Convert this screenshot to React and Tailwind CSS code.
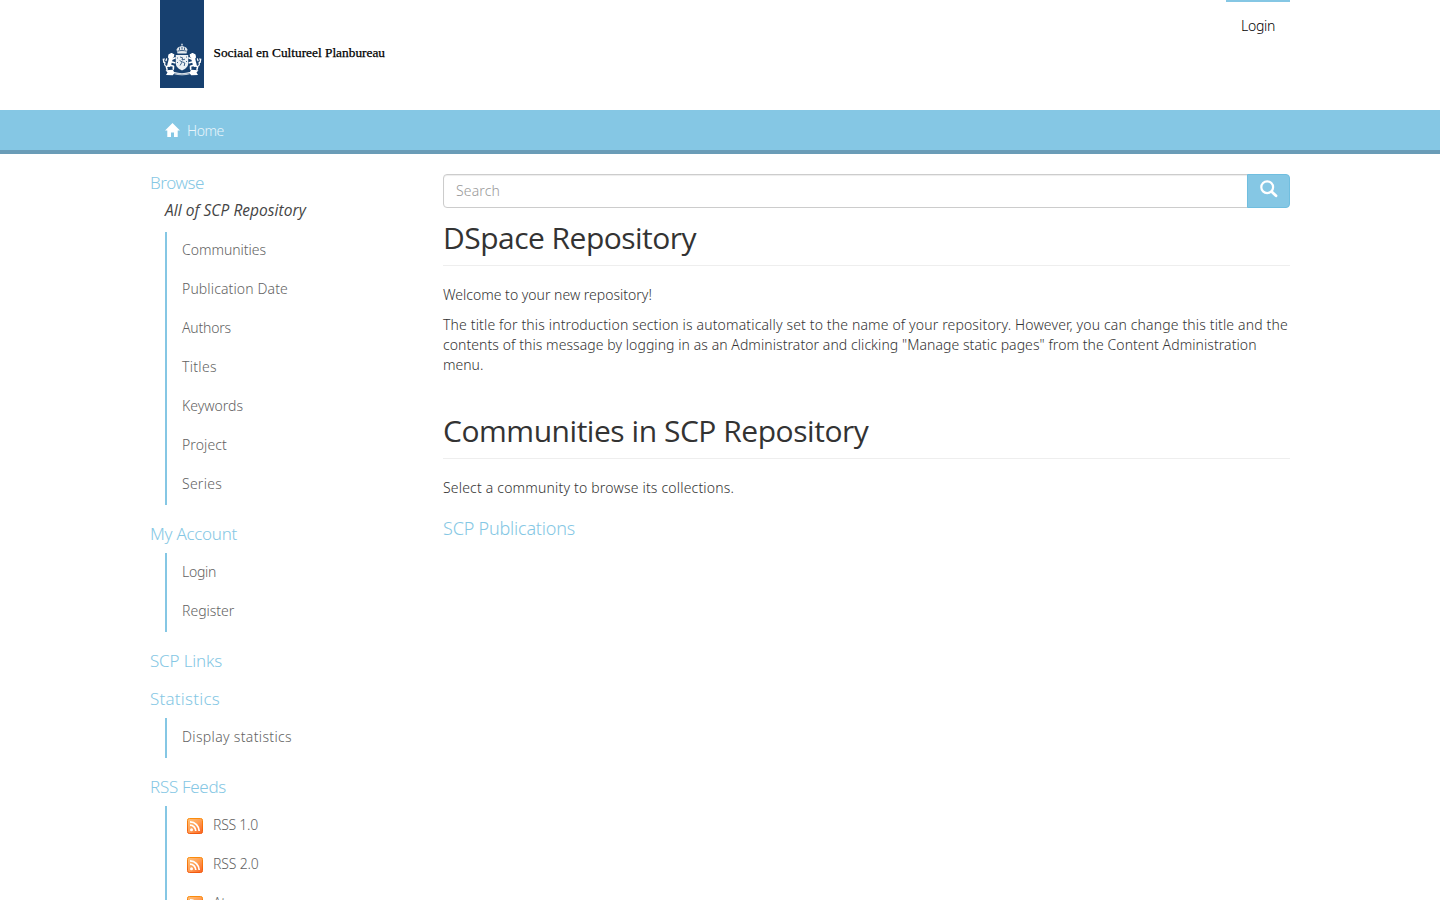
function CoatOfArms() {
  return (
    <svg viewBox="0 0 44 88" className="block h-[88px] w-[44px] shrink-0 bg-[#17406f]">
      <g fill="#fff">
        {/* crown */}
        <path d="M21.300 43.800h1.400v1.600h-1.400zM17.500 53.400l-1-4 1.400-2 2.200-.8 1.900-.5 1.900.5 2.200.8 1.400 2-1 4z" opacity=".88" />
        {/* shield */}
        <path d="M15.800 55h12.400v8.200c0 3.600-2.800 5.600-6.200 7.200-3.400-1.600-6.200-3.600-6.200-7.200z" opacity=".92" />
        {/* ribbon */}
        <path d="M5.500 70.200l7.500-.4 1 2.300c5.300 1.500 10.700 1.500 16 0l1-2.300 7.500.4-2 2.200 1.500 2.600-6.800.3-1-1.300c-5.400 1.700-11 1.700-16.400 0l-1 1.300-6.800-.3 1.500-2.600z" />
      </g>
      {/* lions flanking the shield */}
      {['', 'translate(44 0) scale(-1 1)'].map((t) => (
        <g key={t} transform={t} fill="none" stroke="#fff" strokeLinecap="round" strokeLinejoin="round">
          <path d="M9 54.800l2.500-1.300 2.300 1.200-.6 2.200-2.600 1.200-2-.8z" fill="#fff" strokeWidth="1.200" />
          <path d="M10.500 57.500c.6 2.600-.9 4.800-1.300 7.500" strokeWidth="3.800" />
          <path d="M11 59.500l4-1.600M11 61.800l3.700 1M9.500 65l4 1.200-.2 2.900M8.800 65.300l-2.400 1.600.6 2.300" strokeWidth="1.600" />
          <path d="M6.800 66.500c-2.500-.6-2.400-2.500-1.800-3.800-1.500-.8-1.800-2.400-.8-3.700M3.800 62.300l-.6-3.300M6 60.700l.6-1.900" strokeWidth="1.200" />
        </g>
      ))}
      <g fill="none" stroke="#17406f" strokeWidth=".8">
        <path d="M17.300 51.200c3-.9 6.400-.9 9.400 0M19.500 47.600v2.300M22 47v2.500M24.500 47.600v2.300" />
        <path d="M20 57l2.600.8-.6 2.200 3-.8M19.600 60.500l2.600 1.400-2.200 3.600M22.500 61.800l2.300 1.200-.6 3M17.500 57.500v1M17.500 62v1M26.500 56.500v1M26.500 61v1" />
        <path d="M14 73.400c5.300 1.200 10.700 1.200 16 0" strokeWidth=".5" />
      </g>
    </svg>
  );
}

function HomeIcon() {
  return (
    <svg viewBox="0 0 15 14" className="-mt-0.5 h-[14px] w-[15px]" fill="#fff">
      <path d="M7.500 0L15 7.500h-2.300V14H9V9.500H6V14H2.300V7.500H0z" />
    </svg>
  );
}

function SearchIcon() {
  return (
    <svg viewBox="0 0 18 18" className="h-[18px] w-[18px]" fill="none" stroke="#fff">
      <circle cx="7.200" cy="7.200" r="5.900" strokeWidth="2.200" />
      <path d="M11.700 11.700l4.300 4" strokeWidth="2.800" strokeLinecap="round" />
    </svg>
  );
}

function FeedIcon() {
  return (
    <svg viewBox="0 0 16 16" className="h-4 w-4 shrink-0">
      <defs>
        <linearGradient id="feed" x1="0" y1="0" x2="1" y2="1">
          <stop offset="0" stopColor="#ffc27a" />
          <stop offset=".5" stopColor="#ff9f55" />
          <stop offset="1" stopColor="#fb6020" />
        </linearGradient>
        <linearGradient id="feedEdge" x1="0" y1="0" x2="0" y2="1">
          <stop offset="0" stopColor="#fb8c0c" />
          <stop offset="1" stopColor="#f2590e" />
        </linearGradient>
      </defs>
      <rect x=".5" y=".5" width="15" height="15" rx="1.800" fill="url(#feed)" stroke="url(#feedEdge)" />
      <circle cx="4.500" cy="11.700" r="1.500" fill="#fff" />
      <path d="M3 7.200c3.200 0 5.800 2.600 5.800 5.900M3 3.800c5 0 9.200 4.200 9.200 9.300" fill="none" stroke="#fff" strokeWidth="1.700" />
    </svg>
  );
}

function SideHeading({ className, children }) {
  return <h2 className={`h-5 whitespace-nowrap text-[17px] leading-5 text-[#85c7e4] ${className}`}>{children}</h2>;
}

function SideList({ items, feed = false, className = '' }) {
  return (
    <ul className={`ml-[15px] border-l-2 border-[#85c7e4] text-[#626262] ${className}`}>
      {items.map(([label, tracking]) => (
        <li key={label} className={`flex h-[39px] items-center whitespace-nowrap leading-5 first:[&]:mt-0 ${feed ? 'gap-2.5 pl-5' : 'pl-[15px]'}`}>
          {feed && <FeedIcon />}
          <a className={`${tracking} -mt-px`}>{label}</a>
        </li>
      ))}
    </ul>
  );
}

const browse = [
  ['Communities', 'tracking-[-0.03px] pb-0.5'],
  ['Publication Date', 'tracking-[0.13px] pb-0.5'],
  ['Authors', 'tracking-[-0.19px] pb-0.5'],
  ['Titles', 'tracking-[0.3px] pb-0.5'],
  ['Keywords', 'tracking-[0px] pb-0.5'],
  ['Project', 'tracking-[0.1px] pb-0.5'],
  ['Series', 'tracking-[0.25px] pb-0.5'],
];

export default function App() {
  return (
    <div className="h-screen overflow-hidden bg-white text-[14px] font-light leading-5 text-[#333] [font-family:'Noto_Sans','Open_Sans',sans-serif]">
      <header className="mx-auto flex h-[110px] w-[1140px] items-start justify-between pl-2.5">
        <div className="flex">
          <CoatOfArms />
          <svg viewBox="0 0 190 88" className="h-[88px] w-[190px]">
            <text x="9.500" y="57" textLength="171.500" lengthAdjust="spacingAndGlyphs" fontFamily="'Liberation Serif',serif" fontSize="13" fontWeight="400" fill="#000" stroke="#000" strokeWidth=".25">Sociaal en Cultureel Planbureau</text>
          </svg>
        </div>
        <a className="h-[54px] w-16 border-t-2 border-[#85c7e4] pl-[15px] pt-[14px] tracking-[-0.29px] text-black">Login</a>
      </header>

      <div className="h-11 border-b-4 border-[#6a9cb7] bg-[#85c7e4]">
        <div className="mx-auto flex h-10 w-[1140px] items-center gap-[7px] pl-[15px] pt-px text-[#e8f5fb]">
          <HomeIcon />
          <span className="tracking-[-0.5px]">Home</span>
        </div>
      </div>

      <div className="mx-auto flex w-[1140px] pt-5">
        <aside className="w-[293px] shrink-0">
          <SideHeading className="-mt-px tracking-[-0.45px]">Browse</SideHeading>
          <p className="h-[39px] whitespace-nowrap pl-[15px] pt-[7px] text-[15.5px] font-normal italic tracking-[0.05px] text-[#444] [font-family:'Open_Sans',sans-serif]">All of SCP Repository</p>
          <SideList items={browse} />
          <SideHeading className="mt-[19px] tracking-[-0.28px]">My Account</SideHeading>
          <SideList className="mt-[9px] pb-px" items={[['Login', 'tracking-[-0.29px]'], ['Register', 'tracking-[0px]']]} />
          <SideHeading className="mt-[19px] tracking-[-0.17px]">SCP Links</SideHeading>
          <SideHeading className="mt-[18px] tracking-[0.23px]">Statistics</SideHeading>
          <SideList className="mt-[9px] pb-px" items={[['Display statistics', 'tracking-[0.34px]']]} />
          <SideHeading className="mt-[19px] tracking-[-0.3px]">RSS Feeds</SideHeading>
          <SideList feed className="mt-[9px]" items={[['RSS 1.0', 'tracking-[-0.25px]'], ['RSS 2.0', 'tracking-[-0.15px]'], ['Atom', 'tracking-[-0.2px]']]} />
        </aside>

        <main className="min-w-0 flex-1">
          <div className="flex h-[34px]">
            <div className="flex flex-1 items-center rounded-l border border-[#ccc] pl-3 shadow-[inset_0_1px_1px_rgba(0,0,0,0.075)]">
              <span className="tracking-[0.15px] text-[#999]">Search</span>
            </div>
            <button className="-ml-px flex w-[43px] justify-center rounded-r border border-[#70bedf] bg-[#85c7e4] pt-[5px]">
              <SearchIcon />
            </button>
          </div>

          <h2 className="mt-[13px] h-[45px] whitespace-nowrap border-b border-[#eee] text-[30px] font-normal leading-[33px] tracking-[-0.52px] [font-family:'Open_Sans',sans-serif]">DSpace Repository</h2>
          <p className="mt-[19px]">Welcome to your new repository!</p>
          <p className="mt-2.5 whitespace-nowrap">
            <span className="tracking-[0.15px]">The title for this introduction section is automatically set to the name of your repository. However, you can change this title and the</span><br />
            <span className="tracking-[0.07px]">contents of this message by logging in as an Administrator and clicking "Manage static pages" from the Content Administration</span><br />
            menu.
          </p>
          <h2 className="mt-[39px] h-[45px] whitespace-nowrap border-b border-[#eee] text-[30px] font-normal leading-[33px] tracking-[-0.46px] [font-family:'Open_Sans',sans-serif]">Communities in SCP Repository</h2>
          <p className="mt-[19px] tracking-[0.19px]">Select a community to browse its collections.</p>
          <h4 className="mt-5 text-[18px] tracking-[-0.2px] text-[#85c7e4]">SCP Publications</h4>
        </main>
      </div>
    </div>
  );
}
